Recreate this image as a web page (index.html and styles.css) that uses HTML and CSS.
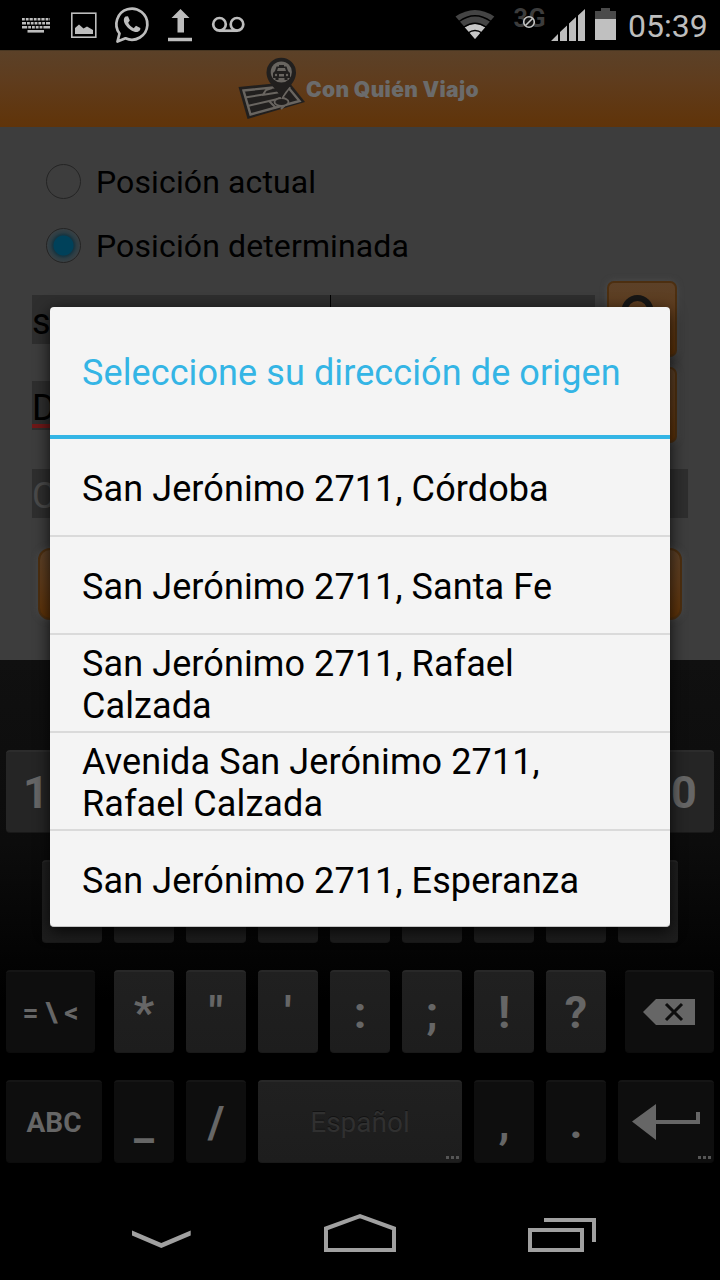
FILE: index.html
```html
<!DOCTYPE html>
<html lang="es">
<head>
<meta charset="utf-8">
<title>Con Quién Viajo</title>
<link rel="stylesheet" href="styles.css">
</head>
<body>
<div class="screen">
  <header class="statusbar">
    <svg width="60" height="50" viewBox="0 0 60 50" fill="none" stroke="#bdbdbd">
      <path d="M22 19.3H50" stroke-width="2.6" stroke-dasharray="2.8 1 2.8 1 3.200 1"/>
      <path d="M22 23.3H50" stroke-width="2.6" stroke-dasharray="4 1 2.8 1 2.8 1 2.8 1 2.8 1 2.8 1 4 1"/>
      <path d="M22 27.3H50" stroke-width="2.6" stroke-dasharray="5.2 1 2.8 1 2.8 1 2.8 1 2.8 1 7 1"/>
      <path d="M27.5 31.3H44" stroke-width="2.6"/>
    </svg>
    <svg width="45" height="50" viewBox="60 0 45 50">
      <rect x="71.800" y="13.200" width="24" height="24" fill="none" stroke="#bdbdbd" stroke-width="1.600"/>
      <path d="M75 34V28L79 24.5L83.500 28.500L87 26.500L93 30V34Z" fill="#bdbdbd"/>
    </svg>
    <svg width="53" height="50" viewBox="105 0 53 50">
      <path d="M117.500 41.500L119.500 33.500A15.500 15.500 0 1 1 125.500 38.300Z" fill="none" stroke="#bdbdbd" stroke-width="2.700" stroke-linejoin="round"/>
      <path d="M125.500 16.500C123 18.500 123.500 22 126 25.500C129 29.500 133 32 136.500 32C139 31.700 140.800 29.800 140.300 27.900L136 25.800L133.700 28.200C131 27 129 25 128.200 22.800L129.800 20.500L128 16.300Z" fill="#bdbdbd"/>
    </svg>
    <svg width="47" height="50" viewBox="158 0 47 50" fill="#bdbdbd">
      <path d="M180.500 9L189.500 18H184V32.500H177.500V18H171.500ZM168 37.800H192V41.200H168Z"/>
    </svg>
    <svg width="55" height="50" viewBox="205 0 55 50" fill="none" stroke="#bdbdbd" stroke-width="2.700">
      <circle cx="219.500" cy="24.300" r="6.300"/><circle cx="237" cy="24.300" r="6.300"/><path d="M219 30.700H237.500"/>
    </svg>
    <span class="spacer"></span>
    <svg width="54" height="50" viewBox="450 0 54 50">
      <path d="M475 39L455.500 16.500Q475 3.500 494.300 16.500Z" fill="#444"/>
      <path d="M475 39L464.700 27.200Q475 20 485.200 27.200Z" fill="#c6c6c6"/>
      <path d="M459 21.500Q475 10 491 21.500M464 27Q475 19.500 486 27M468 33Q475 28 482 33" fill="none" stroke="#000" stroke-width="1.500"/>
    </svg>
    <svg width="44" height="50" viewBox="504 0 44 50">
      <text x="513.500" y="27" class="network" textLength="32">3G</text>
      <circle cx="529" cy="22" r="5.300" fill="#111" stroke="#c6c6c6" stroke-width="1.600"/><path d="M525.500 25.500L532.500 18.500" stroke="#c6c6c6" stroke-width="1.600"/>
    </svg>
    <svg width="44" height="50" viewBox="548 0 44 50" fill="#bdbdbd">
      <path d="M551 41L558 34V41ZM560 41V32L567 25.500V41ZM569 41V23.500L576 17V41ZM578 41V15.500L585 9V41Z"/>
    </svg>
    <svg width="28" height="50" viewBox="592 0 28 50">
      <path d="M595 19V11H601V8H610V11H616V19Z" fill="#4a4a4a"/><path d="M595 19H616V40H595Z" fill="#c0c0c0"/>
    </svg>
    <span class="clock">05:39</span>
  </header>

  <div class="appbar">
    <svg class="logo" width="70" height="66" viewBox="236 56 70 66">
      <path d="M238.500 87L289 82L305 102L247.500 119Z" fill="#211f1e"/>
      <path d="M243.500 90.500L287 86L299.500 101L250.500 114.500Z" fill="none" stroke="#696560" stroke-width="2.400"/>
      <path d="M245 97.500L263 94.500L266 90L272 88M247.500 106L282 98L290 87M262 95L287 91M269 101L276 108M281 109L287 103" fill="none" stroke="#696560" stroke-width="2"/>
      <ellipse cx="281.500" cy="102" rx="7" ry="4" fill="#211f1e" stroke="#696560" stroke-width="1.800"/>
      <path d="M281.500 99C279 90 266.500 84 266.500 72.500A14.700 14.700 0 0 1 296 72.500C296 84 284 90 281.500 99Z" fill="#211f1e"/>
      <circle cx="281.300" cy="72" r="10.600" fill="#696560"/>
      <path d="M275 71L276.500 66.500H279V65H284V66.500H286.500L288 71L290 73V78H287.500V80H284.500V78H278.500V80H275.500V78H273V73Z" fill="#211f1e"/>
      <path d="M277 71L278 68H285L286 71ZM279 74H284V76.500H279Z" fill="#696560"/><circle cx="276" cy="75" r="1.200" fill="#696560"/><circle cx="287" cy="75" r="1.200" fill="#696560"/>
    </svg>
    <span class="brand">Con Quién Viajo</span>
  </div>

  <main class="form">
    <label class="option"><span class="radio"></span><span>Posición actual</span></label>
    <label class="option"><span class="radio checked"></span><span>Posición determinada</span></label>
    <div class="row">
      <div class="field origin"><span>s</span><i class="caret"></i></div>
      <div class="button">
        <svg width="56" height="60" viewBox="0 0 56 60" fill="none" stroke="#171615"><circle cx="22.500" cy="22" r="13" stroke-width="6"/><path d="M32 32L45 45" stroke-width="7"/></svg>
      </div>
    </div>
    <div class="row">
      <div class="field"><span class="misspelled">D</span></div>
      <div class="button"></div>
    </div>
    <div class="field wide hint">C</div>
    <div class="button submit"></div>
  </main>

  <section class="keyboard">
    <div class="keys top">
      <b class="key">1</b><b class="key"></b><b class="key"></b><b class="key"></b><b class="key"></b><b class="key"></b><b class="key"></b><b class="key"></b><b class="key"></b><b class="key">0</b>
    </div>
    <div class="keys second">
      <b class="key"></b><b class="key"></b><b class="key"></b><b class="key"></b><b class="key"></b><b class="key"></b><b class="key"></b><b class="key"></b><b class="key"></b>
    </div>
    <div class="keys third">
      <b class="key dark symbols">= \ &lt;</b>
      <b class="key">*</b><b class="key">"</b><b class="key">'</b><b class="key">:</b><b class="key">;</b><b class="key">!</b><b class="key">?</b>
      <div class="key dark delete"><svg width="52" height="26" viewBox="0 0 52 26"><path d="M0 13L13 0H52V26H13Z" fill="#666"/><path d="M23 5L39 21M39 5L23 21" stroke="#0e0e0e" stroke-width="3"/></svg></div>
    </div>
    <div class="keys">
      <b class="key dark abc">ABC</b><b class="key dark">_</b><b class="key dark">/</b>
      <div class="key space">Español<i class="more"></i></div>
      <b class="key dark">,</b><b class="key dark">.</b>
      <div class="key dark enter"><svg width="68" height="36" viewBox="0 0 68 36" fill="#666"><path d="M0 17.500L24 0V16H64V8H68V20H24V36Z"/></svg><i class="more"></i></div>
    </div>
  </section>

  <nav class="navbar">
    <svg width="60" height="40" viewBox="131 1213 60 40" fill="#a0a0a0"><path d="M132 1230.500L161.300 1243L190.700 1230.500V1235.500L161.300 1248L132 1235.500Z"/></svg>
    <svg width="74" height="40" viewBox="322 1213 74 40" fill="none" stroke="#a0a0a0" stroke-width="4"><path d="M326 1228.500L360 1216.200L394 1228.500V1250H326Z"/></svg>
    <svg width="70" height="40" viewBox="527 1213 70 40" fill="none" stroke="#a0a0a0" stroke-width="4"><path d="M530 1230H582V1250H530ZM544 1220H594V1242"/></svg>
  </nav>

  <div class="dialog">
    <h1 class="title">Seleccione su dirección de origen</h1>
    <ul class="choices">
      <li>San Jerónimo 2711, Córdoba</li>
      <li>San Jerónimo 2711, Santa Fe</li>
      <li>San Jerónimo 2711, Rafael<br>Calzada</li>
      <li>Avenida San Jerónimo 2711,<br>Rafael Calzada</li>
      <li>San Jerónimo 2711, Esperanza</li>
    </ul>
  </div>
</div>
</body>
</html>
```
FILE: styles.css
```css
* { box-sizing: border-box; }
body { margin: 0; background: #000; font-family: Roboto, sans-serif; }
svg { display: block; flex: none; }
.screen { position: relative; width: 720px; height: 1280px; overflow: hidden; display: flex; flex-direction: column; background: #000; }

.statusbar { height: 50px; display: flex; flex: none; }
.spacer { flex: 1; }
.network { font: 700 25px Roboto, sans-serif; fill: #3c3c3c; }
.clock { width: 100px; padding-left: 8px; font-size: 32px; line-height: 53px; color: #bdbdbd; white-space: nowrap; }

.appbar { height: 77px; flex: none; display: flex; align-items: center; padding-left: 236px; background: linear-gradient(#5b4128, #5f3c1d 40%, #60350c 90%, #60340a); border-top: 1px solid #493722; }
.brand { font: 900 21px/30px Inter, sans-serif; letter-spacing: .3px; color: #6b6b6b; white-space: nowrap; margin-top: 1px; }

.form { height: 533px; flex: none; padding: 22px 32px 0; background: #3d3d3d; display: flex; flex-direction: column; color: #000; }
.option { height: 64px; display: flex; align-items: center; gap: 15px; padding: 1px 0 0 14px; font-size: 32px; letter-spacing: .12px; white-space: nowrap; }
.radio { width: 35px; height: 35px; margin-top: -1px; border: 1px solid #242424; border-radius: 50%; flex: none; }
.checked { background: radial-gradient(circle, #00415a 0 9.500px, #173440 10.500px, #2c3d44 13px, #3b4144 17px); }
.row { height: 76px; margin: 4px 11px 10px 0; display: flex; justify-content: space-between; }
.row + .row { margin-top: 0; }
.field { width: 563px; height: 49px; margin-top: 14px; padding-left: 0; display: flex; background: #2e2e2e; font-size: 36px; line-height: 55px; white-space: nowrap; }
.origin { justify-content: space-between; padding-right: 264px; }
.caret { width: 1px; height: 49px; background: #000; }
.misspelled { width: 30px; height: 47px; border-bottom: 4px solid #6e1818; }
.wide { width: 656px; margin-top: 16px; flex: none; }
.hint { color: #4a4a4a; }
.button { width: 70px; height: 76px; padding: 6px; border: 2px solid #4d2f10; border-radius: 7px; background: linear-gradient(#5c4128, #5f3b1a 50%, #5e3207); box-shadow: 0 0 6px #4d4d4d; }
.submit { width: 644px; height: 72px; margin: 30px 0 0 6px; border-radius: 12px; flex: none; }

.keyboard { height: 524px; flex: none; padding: 90px 6px 0; display: flex; flex-direction: column; gap: 27px; background: linear-gradient(#101010, #0c0c0c 35%, #000 65%); }
.keys { height: 83px; flex: none; display: flex; gap: 12px; }
.second { padding-left: 36px; }
.key { position: relative; width: 60px; height: 83px; padding-top: 1px; flex: none; display: flex; align-items: center; justify-content: center; border-radius: 4px; border-top: 2px solid #282828; border-bottom: 1px solid #191919; background: linear-gradient(#202020, #1d1d1d); color: #666; font-size: 45px; line-height: 50px; }
.top .key { background: #252525; border-top-color: #2c2c2c; }
.dark { background: #0e0e0e; border-color: #151515; border-bottom-color: #0c0c0c; }
.symbols { width: 89px; margin-right: 7px; font-size: 28px; white-space: pre; }
.delete { width: 89px; margin-left: 7px; padding: 0 2px 0 0; }
.abc { width: 96px; font-size: 28px; }
.space { width: 204px; font-size: 28px; color: #303030; text-shadow: 0 -1px #121212; }
.enter { width: 96px; padding-top: 0; }
.more { position: absolute; right: 3px; bottom: 3px; width: 13px; height: 3px; background: repeating-linear-gradient(90deg, #555 0 3px, transparent 3px 5px); }

.navbar { height: 96px; display: flex; justify-content: space-between; padding: 29px 123px 0 131px; }

.dialog { position: absolute; left: 50px; top: 307px; width: 620px; height: 620px; border-radius: 4px; background: #f4f4f4; border-bottom: 1px solid #c4c4c4; box-shadow: 0 4px 16px rgba(0, 0, 0, .8); }
.title { height: 132px; margin: 0; padding-left: 32px; border-bottom: 4px solid #34b5e5; color: #34b5e5; font-weight: 400; font-size: 36px; letter-spacing: .1px; line-height: 133px; white-space: nowrap; }
.choices { list-style: none; margin: 0; padding: 0; }
.choices li { height: 98px; padding: 4px 0 0 32px; display: flex; align-items: center; border-bottom: 2px solid #dadada; font-size: 36px; letter-spacing: .1px; line-height: 42px; color: #000; white-space: nowrap; }
.choices li:last-child { border: 0; padding-top: 2px; }
```
